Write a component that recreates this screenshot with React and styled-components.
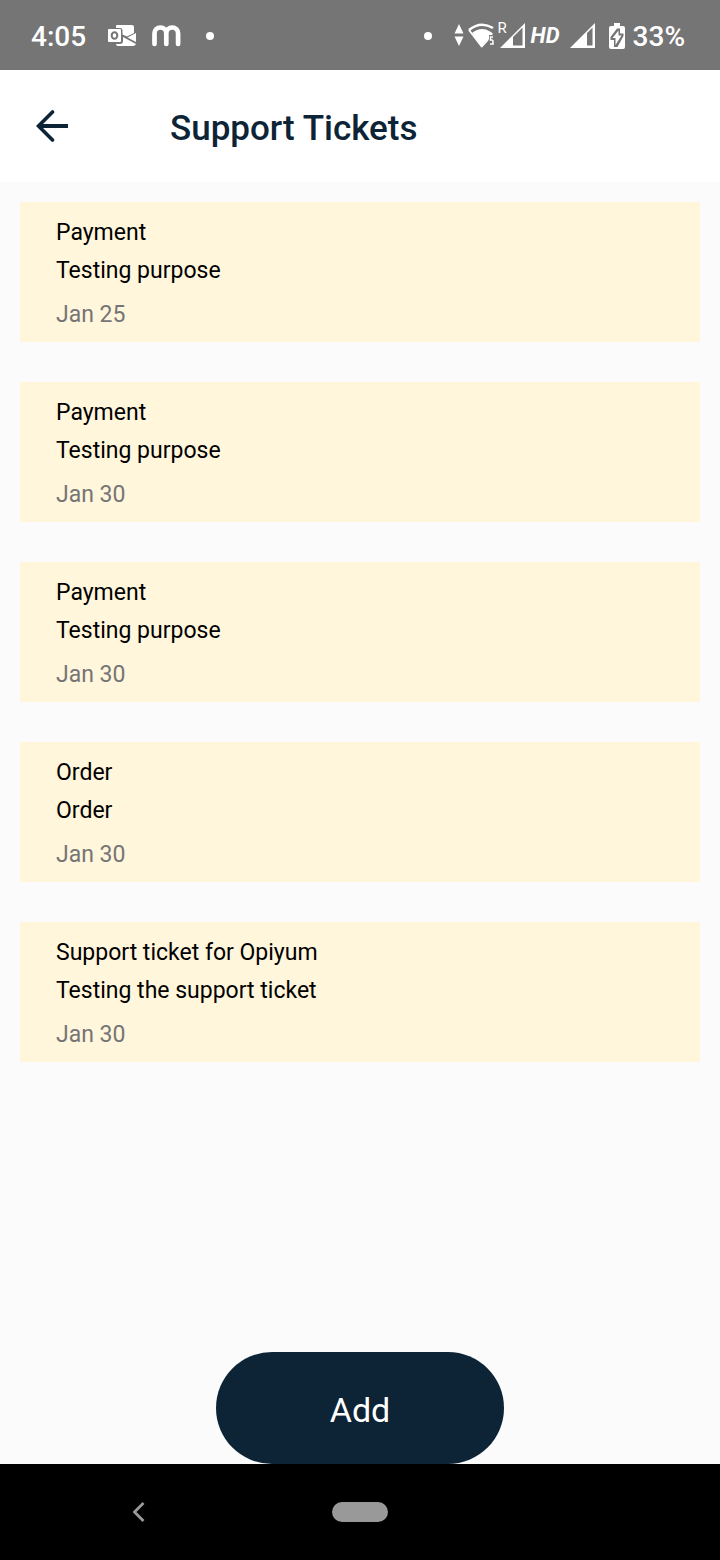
import React from "react";
import styled, { createGlobalStyle } from "styled-components";

const GlobalStyle = createGlobalStyle`
  *, *::before, *::after { box-sizing: border-box; }
  body { margin: 0; background: #fbfbfb; font-family: Roboto, "Noto Sans", sans-serif; }
  h1, p, h2, ul { margin: 0; padding: 0; font-weight: 400; }
  button { font-family: inherit; border: 0; padding: 0; cursor: pointer; }
  svg { display: block; flex: none; }
`;

const Screen = styled.div`
  display: flex;
  flex-direction: column;
  min-height: 100vh;
`;

const StatusBar = styled.div`
  display: flex;
  align-items: center;
  justify-content: space-between;
  height: 70px;
  padding: 1px 35px 0 31px;
  background: #757575;
  color: #fff;
`;

const StatusGroup = styled.div`
  display: flex;
  align-items: center;
`;

const StatusText = styled.span`
  font-size: 28px;
  line-height: 32px;
  padding-top: 2px;
  font-weight: 500;
`;

const NetworkLabel = styled.span`
  font-size: 22px;
  line-height: 28px;
  font-weight: 700;
  font-style: italic;
`;

const Gap = styled.span`
  width: ${(p) => p.$size}px;
  flex: none;
`;

const Dot = styled.span`
  width: 8px;
  height: 8px;
  border-radius: 50%;
  background: #fff;
`;

const Header = styled.header`
  display: flex;
  align-items: center;
  gap: 86px;
  height: 112px;
  padding: 0 20px;
  background: #fff;
  color: #0d2436;
`;

const IconButton = styled.button`
  display: flex;
  align-items: center;
  justify-content: center;
  width: 64px;
  height: 64px;
  background: transparent;
  color: ${(p) => p.$color};
`;

const Title = styled.h1`
  font-size: 35px;
  line-height: 44px;
  font-weight: 500;
  padding-top: 6px;
`;

const TicketList = styled.ul`
  display: flex;
  flex-direction: column;
  gap: 40px;
  flex: 1;
  padding: 20px;
  list-style: none;
`;

const Ticket = styled.li`
  display: flex;
  flex-direction: column;
  gap: 10px;
  padding: 17px 36px 13px;
  background: #fff6dc;
  color: #000;
  font-size: 23px;
  line-height: 28px;
`;

const TicketSubject = styled.h2`
  font-size: inherit;
`;

const TicketDate = styled.p`
  padding-top: 6px;
  color: #757575;
`;

const Footer = styled.footer`
  display: flex;
  justify-content: center;
`;

const AddButton = styled.button`
  width: 40%;
  height: 112px;
  padding-top: 4px;
  border-radius: 56px;
  background: #0d2436;
  color: #fff;
  font-size: 34px;
  line-height: 40px;
`;

const NavBar = styled.nav`
  display: grid;
  grid-template-columns: 1fr auto 1fr;
  align-items: center;
  height: 96px;
  background: #000;
`;

const NavSide = styled.div`
  display: flex;
  justify-content: center;
  padding-right: 54px;
`;

const HomePill = styled.button`
  width: 56px;
  height: 20px;
  border-radius: 10px;
  background: #999;
`;

const MailIcon = () => (
  <svg width="28" height="24" viewBox="0 0 28 24" aria-hidden="true">
    <path d="M8 4V2Q8 1 9 1H24Q26 1 26 3V9L19 12.500L14.500 10.500V7Q14.500 4 12 4Z" fill="#fff" />
    <path d="M28 9V18L19.500 13.500ZM8 20H12Q15 20 15 17V13L28 20Q27 22 25 22H10Q8 22 8 20Z" fill="#fff" />
    <rect y="5" width="13" height="13" rx="1" fill="#fff" />
    <ellipse cx="6.500" cy="11.500" rx="2.800" ry="3.300" fill="none" stroke="#757575" strokeWidth="2" />
  </svg>
);

const MessengerIcon = () => (
  <svg width="30" height="22" viewBox="0 0 30 22" aria-hidden="true">
    <path d="M2.500 19V8.500A5.900 6 0 0 1 14.300 8.500V19M14.300 8.500A5.900 6 0 0 1 26.100 8.500V19" fill="none" stroke="#fff" strokeWidth="4.700" strokeLinecap="round" />
  </svg>
);

const DataArrowsIcon = () => (
  <svg width="10" height="24" viewBox="0 0 10 24" aria-hidden="true">
    <path d="M5 0L9.500 9.500H.5ZM.5 12.500H9.500L5 22Z" fill="#fff" />
  </svg>
);

const WifiIcon = () => (
  <svg width="26" height="26" viewBox="0 0 26 26" aria-hidden="true">
    <path d="M1 7Q12.500-2.500 25 5" fill="none" stroke="#fff" strokeWidth="2.500" />
    <path d="M1 7L14 24" stroke="#fff" strokeWidth="1.800" />
    <path d="M4 10Q13 3 22 8.500L24.500 10V12H21V16L20 18L14 24.500Z" fill="#fff" />
    <path d="M25 14H22.500V17Q25 16.500 25 18.500V21H22" fill="none" stroke="#fff" strokeWidth="1.500" />
  </svg>
);

const SignalIcon = ({ hollowFrom }) => (
  <svg width="25" height="26" viewBox="0 0 25 26" aria-hidden="true">
    <path
      fillRule="evenodd"
      d={`M0 25L25 0V25ZM${hollowFrom} ${27 - hollowFrom}V22.500H22.500V4.500Z`}
      fill="#fff"
    />
  </svg>
);

const RoamingSignal = styled.span`
  display: flex;
  align-items: flex-start;
`;

const RoamingLabel = styled.span`
  width: 2px;
  font-size: 15px;
  line-height: 10px;
`;

const BatteryIcon = () => (
  <svg width="16" height="26" viewBox="0 0 16 26" aria-hidden="true">
    <path d="M5 0H11V3H14Q16 3 16 5V24Q16 26 14 26H2Q0 26 0 24V5Q0 3 2 3H5Z" fill="#fff" />
    <path d="M8 5.500H11V10.500H14.500V13L8.500 24H5V17H1.500V14Z" fill="#757575" />
    <path d="M9.500 7.500L3.500 15H6.500V22L12.500 12.500H9.500Z" fill="#fff" />
  </svg>
);

const BackArrowIcon = () => (
  <svg width="32" height="32" viewBox="0 0 32 32" aria-hidden="true">
    <path d="M16.500 2L2.500 16L16.500 30" fill="none" stroke="currentColor" strokeWidth="3.600" strokeLinecap="round" />
    <path d="M2.500 16H32" stroke="currentColor" strokeWidth="4" />
  </svg>
);

const ChevronIcon = () => (
  <svg width="12" height="20" viewBox="0 0 12 20" aria-hidden="true">
    <path d="M10.500 1L1.500 10L10.500 19" fill="none" stroke="currentColor" strokeWidth="2.800" />
  </svg>
);

const tickets = [
  { id: 1, subject: "Payment", message: "Testing purpose", date: "Jan 25" },
  { id: 2, subject: "Payment", message: "Testing purpose", date: "Jan 30" },
  { id: 3, subject: "Payment", message: "Testing purpose", date: "Jan 30" },
  { id: 4, subject: "Order", message: "Order", date: "Jan 30" },
  { id: 5, subject: "Support ticket for Opiyum", message: "Testing the support ticket", date: "Jan 30" },
];

export default function App() {
  return (
    <Screen>
      <GlobalStyle />
      <StatusBar>
        <StatusGroup>
          <StatusText>4:05</StatusText>
          <Gap $size={22} />
          <MailIcon />
          <Gap $size={16} />
          <MessengerIcon />
          <Gap $size={24} />
          <Dot />
        </StatusGroup>
        <StatusGroup>
          <Dot />
          <Gap $size={22} />
          <DataArrowsIcon />
          <Gap $size={4} />
          <WifiIcon />
          <Gap $size={4} />
          <RoamingSignal>
            <RoamingLabel>R</RoamingLabel>
            <SignalIcon hollowFrom={13} />
          </RoamingSignal>
          <Gap $size={6} />
          <NetworkLabel>HD</NetworkLabel>
          <Gap $size={10} />
          <SignalIcon hollowFrom={17} />
          <Gap $size={14} />
          <BatteryIcon />
          <Gap $size={8} />
          <StatusText>33%</StatusText>
        </StatusGroup>
      </StatusBar>
      <Header>
        <IconButton type="button" aria-label="Back" $color="#0d2436">
          <BackArrowIcon />
        </IconButton>
        <Title>Support Tickets</Title>
      </Header>
      <TicketList>
        {tickets.map((ticket) => (
          <Ticket key={ticket.id}>
            <TicketSubject>{ticket.subject}</TicketSubject>
            <p>{ticket.message}</p>
            <TicketDate>{ticket.date}</TicketDate>
          </Ticket>
        ))}
      </TicketList>
      <Footer>
        <AddButton type="button">Add</AddButton>
      </Footer>
      <NavBar aria-label="System navigation">
        <NavSide>
          <IconButton type="button" aria-label="Go back" $color="#999">
            <ChevronIcon />
          </IconButton>
        </NavSide>
        <HomePill type="button" aria-label="Home" />
      </NavBar>
    </Screen>
  );
}
